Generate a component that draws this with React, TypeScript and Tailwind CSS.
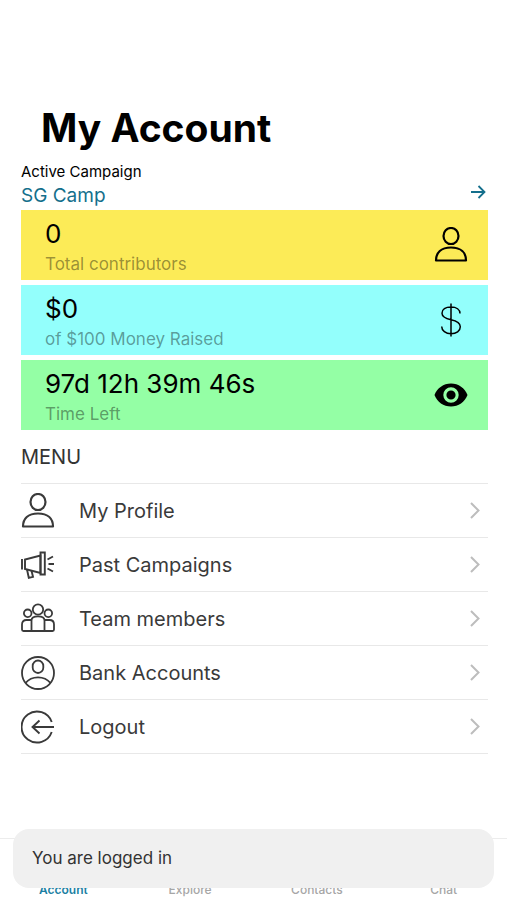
import type { ReactNode } from "react";

function UserIcon({ className }: { className: string }) {
  return (
    <svg viewBox="0 0 34 36" className={className} fill="none" stroke="currentColor" strokeWidth="2.200" aria-hidden="true">
      <ellipse cx="17" cy="9" rx="7.500" ry="8" />
      <path d="M2 33.500c0-8 5-13 15-13s15 5 15 13Z" strokeLinejoin="round" />
    </svg>
  );
}

function DollarIcon() {
  return (
    <svg viewBox="0 0 34 34" className="size-[34px]" fill="none" stroke="currentColor" strokeWidth="1.500" aria-hidden="true">
      <path d="M17 .5v33M26 10.500C26 6.500 22.500 4 17 4S8 6.500 8 10.300c0 4 4 5.400 9 6.500s9.300 2.700 9.300 7-4 6.900-9.300 6.900-9.300-3-9.300-7.200" />
    </svg>
  );
}

function EyeIcon() {
  return (
    <svg viewBox="0 0 34 34" className="size-[34px]" aria-hidden="true">
      <path
        fill="currentColor"
        fillRule="evenodd"
        d="M17 5.500C9.500 5.500 3.200 10 .5 17 3.200 24 9.500 28.500 17 28.500S30.800 24 33.500 17C30.800 10 24.500 5.500 17 5.500Zm0 19.200a7.700 7.700 0 1 1 0-15.400 7.700 7.700 0 0 1 0 15.400Zm0-3.100a4.600 4.600 0 1 0 0-9.200 4.600 4.600 0 0 0 0 9.200Z"
      />
    </svg>
  );
}

function MegaphoneIcon() {
  return (
    <svg viewBox="0 0 34 34" className="size-[34px]" fill="none" stroke="currentColor" strokeWidth="1.900" aria-hidden="true">
      <path d="M1 11v10.500M4 11.500V21l15.500 4V7.500Z" />
      <path d="M19.500 4.500h4.300v22h-4.300Z" />
      <path d="M6 21.500l1.800 8.300 4.200-1-1.500-6M26.500 11.500l5.500-3M27.500 16H33M26.500 20.500l5.500 3" />
    </svg>
  );
}

function TeamIcon() {
  return (
    <svg viewBox="0 0 34 34" className="size-[34px]" fill="none" stroke="currentColor" strokeWidth="1.800" aria-hidden="true">
      <circle cx="17" cy="7.500" r="5.200" />
      <circle cx="6.700" cy="11.300" r="3.800" />
      <circle cx="27.300" cy="11.300" r="3.800" />
      <path d="M10.500 29V18.500c0-3 2-4.200 6.500-4.200s6.500 1.200 6.500 4.200V29M10.500 18H5.500C2.500 18 1 19.500 1 22.500v5c0 1 .5 1.500 1.500 1.500h29c1 0 1.500-.5 1.500-1.500v-5c0-3-1.500-4.500-4.500-4.500h-5" />
    </svg>
  );
}

function BankUserIcon() {
  return (
    <svg viewBox="0 0 34 34" className="size-[34px]" fill="none" stroke="currentColor" strokeWidth="1.800" aria-hidden="true">
      <circle cx="17" cy="17" r="16" />
      <rect x="11.700" y="4.500" width="10.600" height="12.500" rx="5.300" />
      <path d="M4.500 27c3-3.700 7.200-5.700 12.500-5.700S26.500 23.300 29.500 27" />
    </svg>
  );
}

function LogoutIcon() {
  return (
    <svg viewBox="0 0 34 34" className="size-[34px]" fill="none" stroke="currentColor" strokeWidth="1.900" aria-hidden="true">
      <path d="M30.700 12A15.500 15.500 0 1 0 30.700 22M33 17H11.500M18.500 10.500 11.500 17l7 6.500" />
    </svg>
  );
}

function Chevron() {
  return (
    <svg viewBox="0 0 12 18" className="mr-[7px] h-[18px] w-3 text-[#bdbdbd]" fill="none" stroke="currentColor" strokeWidth="2" aria-hidden="true">
      <path d="m2 1 7.500 7.500L2 16" />
    </svg>
  );
}

const stats: { value: string; label: string; color: string; icon: ReactNode }[] = [
  { value: "0", label: "Total contributors", color: "bg-[#fceb57]", icon: <UserIcon className="h-9 w-[34px]" /> },
  { value: "$0", label: "of $100 Money Raised", color: "bg-[#93fffc]", icon: <DollarIcon /> },
  { value: "97d 12h 39m 46s", label: "Time Left", color: "bg-[#94ffa5]", icon: <EyeIcon /> },
];

const menu: { label: string; icon: ReactNode }[] = [
  { label: "My Profile", icon: <UserIcon className="h-9 w-[34px]" /> },
  { label: "Past Campaigns", icon: <MegaphoneIcon /> },
  { label: "Team members", icon: <TeamIcon /> },
  { label: "Bank Accounts", icon: <BankUserIcon /> },
  { label: "Logout", icon: <LogoutIcon /> },
];

const tabs = ["Account", "Explore", "Contacts", "Chat"];

export default function App() {
  return (
    <div className="flex min-h-screen flex-col bg-white font-['Inter','Liberation_Sans',sans-serif] text-black">
      <main className="flex-1 pt-[104px] pr-[19px] pl-[21px]">
        <h1 className="px-5 text-[39px] leading-12 font-bold">My Account</h1>
        <section className="pt-2">
          <p className="text-[15px] leading-6">Active Campaign</p>
          <a href="#campaign" className="flex h-[26px] items-start justify-between text-[19px] leading-6 text-[#146f8c]">
            SG Camp
            <svg viewBox="0 0 16 16" className="mr-[2px] size-4" fill="none" stroke="currentColor" strokeWidth="1.800" aria-hidden="true">
              <path d="M1 8h13M8.500 2l6 6-6 6" />
            </svg>
          </a>
          <div className="flex flex-col gap-[5px]">
            {stats.map((s) => (
              <div key={s.label} className={`flex h-[70px] items-center justify-between pr-5 pl-6 ${s.color}`}>
                <div className="pt-[6px]">
                  <p className="text-[26px] leading-8">{s.value}</p>
                  <p className="text-[17px] leading-7 text-black/40">{s.label}</p>
                </div>
                {s.icon}
              </div>
            ))}
          </div>
        </section>
        <section>
          <h2 className="flex h-[53px] items-center text-[20px] text-[#333]">MENU</h2>
          <ul className="border-t border-[#e8e8e8]">
            {menu.map((m) => (
              <li key={m.label} className="border-b border-[#e8e8e8]">
                <button type="button" className="flex h-[53px] w-full items-center text-left text-[20px] text-[#3a3a3a]">
                  {m.icon}
                  <span className="flex-1 pl-6">{m.label}</span>
                  <Chevron />
                </button>
              </li>
            ))}
          </ul>
        </section>
      </main>
      <nav className="sticky bottom-0 flex h-[62px] items-end border-t border-[#ececec] bg-white pb-[2px]">
        {tabs.map((t) => (
          <a key={t} href={`#${t.toLowerCase()}`} className={`flex-1 text-center text-[12px] leading-4 ${t === "Account" ? "font-semibold text-[#1c7fa3]" : "font-medium text-[#a6a6a6]"}`}>
            {t}
          </a>
        ))}
      </nav>
      <div role="status" className="fixed inset-x-[13px] bottom-3 flex h-[59px] items-center rounded-2xl bg-[#f0f0f0] px-[19px] text-[17px] text-[#333]">
        You are logged in
      </div>
    </div>
  );
}
